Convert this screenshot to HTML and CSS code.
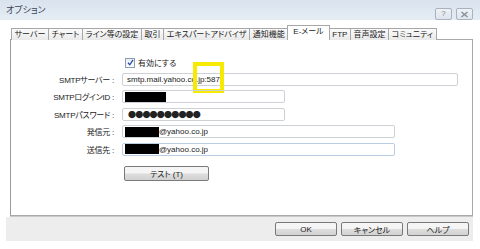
FILE: index.html
```html
<!DOCTYPE html>
<html lang="ja">

<head>
    <meta charset="UTF-8">
    <title>オプション</title>
    <link rel="stylesheet" href="styles.css">
</head>

<body>
    <div class="titlebar">
        <span class="title">オプション</span>
        <div class="caption-btns">
            <span class="cap-btn">?</span>
            <span class="cap-btn">
                <svg width="9" height="7" viewBox="0 0 9 7">
                    <path d="M1.5 1 L7.5 6 M7.5 1 L1.5 6" stroke="#8a939c" stroke-width="1.6" fill="none"/>
                </svg>
            </span>
        </div>
    </div>

    <div class="dialog">
        <div class="tabs">
            <div class="tab">サーバー</div>
            <div class="tab">チャート</div>
            <div class="tab">ライン等の設定</div>
            <div class="tab">取引</div>
            <div class="tab">エキスパートアドバイザ</div>
            <div class="tab">通知機能</div>
            <div class="tab active">E-メール</div>
            <div class="tab">FTP</div>
            <div class="tab">音声設定</div>
            <div class="tab">コミュニティ</div>
        </div>

        <div class="panel">
            <div class="form">
                <span></span>
                <label class="check">
                    <span class="box">
                        <svg width="7" height="7" viewBox="0 0 7 7">
                            <path d="M1 3.8 L2.8 5.8 L6 0.8" stroke="#2a4fa8" stroke-width="1.3" fill="none"/>
                        </svg>
                    </span>
                    有効にする
                </label>

                <span class="label">SMTPサーバー :</span>
                <div class="field server">
                    smtp.mail.yahoo.co.jp:587
                    <span class="marker"></span>
                </div>

                <span class="label">SMTPログインID :</span>
                <div class="field short"><span class="redact login"></span></div>

                <span class="label">SMTPパスワード :</span>
                <div class="field short"><span class="dots">●●●●●●●●●●</span></div>

                <span class="label">発信元 :</span>
                <div class="field mid"><span class="redact mail"></span>@yahoo.co.jp</div>

                <span class="label">送信先 :</span>
                <div class="field mid focus"><span class="redact mail"></span>@yahoo.co.jp</div>

                <span></span>
                <button class="btn test">テスト (T)</button>
            </div>
        </div>

        <div class="footer">
            <button class="btn">OK</button>
            <button class="btn">キャンセル</button>
            <button class="btn">ヘルプ</button>
        </div>
    </div>
</body>

</html>
```

FILE: styles.css
```css
body {
    margin: 0;
    width: 480px;
    height: 249px;
    background: white;
    font-family: "Liberation Sans", "Noto Sans CJK JP", sans-serif;
    font-size: 8px;
    font-feature-settings: "palt";
    color: #222;
    overflow: hidden;
}

.titlebar {
    height: 20px;
    display: flex;
    justify-content: space-between;
    background: linear-gradient(#d9e3ee, #e5ecf4);
}

.title {
    font-size: 9px;
    color: #3a4656;
    margin: 3px 0 0 6px;
}

.caption-btns {
    display: flex;
    gap: 4px;
    margin: 8px 7px 0 0;
}

.cap-btn {
    width: 15px;
    height: 10px;
    border: 1px solid #a8b3bf;
    border-radius: 2px;
    background: linear-gradient(#eef2f6, #dfe5ec);
    color: #7d8792;
    font-size: 8px;
    line-height: 10px;
    text-align: center;
    display: flex;
    justify-content: center;
    align-items: center;
}

.dialog {
    margin: 0 7px 0 6px;
}

.tabs {
    display: flex;
    align-items: flex-end;
    height: 14px;
    margin: 6px 0 -1px 5px;
    position: relative;
    z-index: 1;
}

.tab {
    height: 11px;
    line-height: 11px;
    padding: 0 2.6px;
    border: 1px solid #a7a7a7;
    border-bottom: none;
    margin-right: -1px;
    background: linear-gradient(#fbfbfb, #e9e9e9);
    white-space: nowrap;
}

.tab.active {
    height: 14px;
    line-height: 11px;
    background: white;
    padding: 0 5px;
}

.panel {
    margin-left: 4px;
    height: 175px;
    border: 1px solid #a9a9a9;
    border-left-color: #9a9a9a;
    background: white;
    box-shadow: 0 1px 0 #c9c9c9;
}

.form {
    display: grid;
    grid-template-columns: 103px auto;
    column-gap: 8px;
    row-gap: 4.6px;
    align-items: center;
    justify-items: start;
    padding-top: 15px;
}

.label {
    justify-self: end;
    white-space: nowrap;
    letter-spacing: -0.25px;
}

.check {
    display: flex;
    align-items: center;
    gap: 3px;
    margin: 2px 0 0 3px;
    font-size: 8px;
}

.box {
    width: 8px;
    height: 8px;
    border: 1px solid #8e9db5;
    background: linear-gradient(#e9eef7, #fdfdfe);
    display: flex;
    justify-content: center;
    align-items: center;
}

.field {
    height: 11px;
    border: 1px solid #cdd1d6;
    border-radius: 2px;
    display: flex;
    align-items: center;
    padding: 0 2px;
    white-space: nowrap;
    font-size: 8px;
    position: relative;
}

.field.server {
    width: 328px;
    padding-left: 4px;
}

.field.short {
    width: 157px;
}

.field.mid {
    width: 267px;
}

.field.focus {
    border-color: #b9cde3;
}

.redact {
    background: black;
    height: 10px;
    display: inline-block;
}

.redact.login {
    width: 41px;
}

.redact.mail {
    width: 34px;
}

.dots {
    font-family: "Noto Sans CJK JP", sans-serif;
    font-size: 8px;
    letter-spacing: -0.8px;
    padding-left: 3px;
}

.marker {
    position: absolute;
    left: 70px;
    top: -12px;
    width: 23px;
    height: 23px;
    border: 4px solid #f5ea00;
}

.btn {
    font-family: "Liberation Sans", "Noto Sans CJK JP", sans-serif;
    font-size: 8px;
    font-feature-settings: "palt";
    height: 14px;
    width: 62px;
    padding: 0;
    border: 1px solid #7a7a7a;
    border-radius: 2px;
    background: linear-gradient(#f5f5f5 45%, #dcdcdc 55%, #d2d2d2);
    color: #222;
}

.btn.test {
    width: 85px;
    height: 15px;
    margin: 5px 0 0 2px;
}

.footer {
    height: 24px;
    margin-top: 1px;
    background: #ededed;
    display: flex;
    justify-content: flex-end;
    align-items: center;
    gap: 4px;
    padding-right: 4px;
}
```
